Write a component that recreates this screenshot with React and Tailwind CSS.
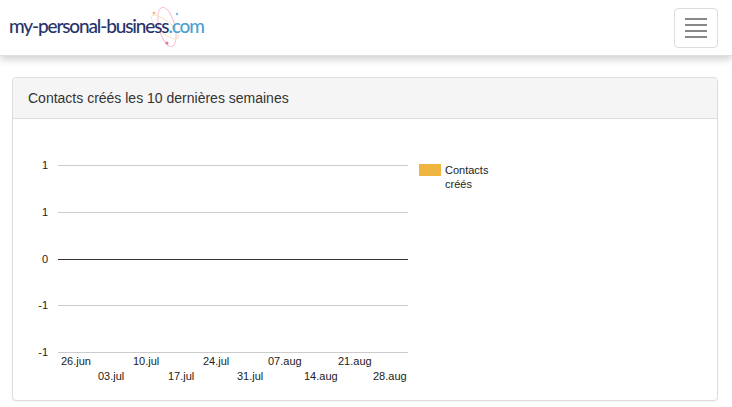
const yTicks = [
  { y: 165, label: "1" },
  { y: 212, label: "1" },
  { y: 259, label: "0", dark: true },
  { y: 305, label: "-1" },
  { y: 352, label: "-1" },
];

const xTicks = [
  { x: 61, y: 365, label: "26.jun" },
  { x: 98, y: 380, label: "03.jul" },
  { x: 133, y: 365, label: "10.jul" },
  { x: 168, y: 380, label: "17.jul" },
  { x: 203, y: 365, label: "24.jul" },
  { x: 237, y: 380, label: "31.jul" },
  { x: 268, y: 365, label: "07.aug" },
  { x: 304, y: 380, label: "14.aug" },
  { x: 338, y: 365, label: "21.aug" },
  { x: 373, y: 380, label: "28.aug" },
];

// svg coordinates below are page coordinates minus the panel body origin
const OX = 13;
const OY = 119;

const Logo = () => (
  <div className="relative w-[200px] h-[44px]">
    <svg className="absolute left-[138px] top-0" width="50" height="46" viewBox="0 0 50 46" fill="none">
      <ellipse cx="20" cy="21" rx="8" ry="20" stroke="#f6c6d4" strokeWidth="1" transform="rotate(-14 20 21)" />
      <ellipse cx="18" cy="21" rx="17" ry="6" stroke="#f8e4cf" strokeWidth="1" transform="rotate(40 18 21)" />
      <circle cx="7" cy="7" r="1.5" fill="#eebd8f" />
      <circle cx="30" cy="8" r="1.2" fill="#7cc0dc" />
      <circle cx="20" cy="37" r="1.5" fill="#d97a9c" />
    </svg>
    <div className="absolute left-0 top-[8px] text-[19px] leading-[24px] tracking-[-1.14px] font-medium font-['Lato',sans-serif] text-[#27336b] whitespace-nowrap">
      my-personal-business<span className="text-[#4aa3cf]">.com</span>
    </div>
  </div>
);

const Burger = () => (
  <button className="flex flex-col justify-center gap-1 w-[44px] h-[40px] px-[10px] bg-white border border-[#dddddd] rounded">
    <span className="block h-[2px] bg-[#888888]" />
    <span className="block h-[2px] bg-[#888888]" />
    <span className="block h-[2px] bg-[#888888]" />
    <span className="block h-[2px] bg-[#888888]" />
  </button>
);

const Chart = () => (
  <svg width="704" height="281" className="block" fontFamily="'Liberation Sans', Arial, sans-serif" fontSize="11">
    {yTicks.map((t) => (
      <g key={t.y}>
        <line x1={58 - OX} x2={408 - OX} y1={t.y - OY + 0.5} y2={t.y - OY + 0.5} stroke={t.dark ? "#333333" : "#cccccc"} />
        <text x={48 - OX} y={t.y - OY + 4} textAnchor="end" fill="#222222">{t.label}</text>
      </g>
    ))}
    {xTicks.map((t) => (
      <text key={t.label} x={t.x - OX} y={t.y - OY} fill="#222222">{t.label}</text>
    ))}
    <rect x={419 - OX} y={164 - OY} width="22" height="12" fill="#f0b441" />
    <text x={445 - OX} y={174 - OY} fill="#222222">Contacts</text>
    <text x={445 - OX} y={188 - OY} fill="#222222">créés</text>
  </svg>
);

export default function App() {
  return (
    <div className="h-[407px] overflow-hidden bg-white font-['Liberation_Sans',Arial,sans-serif] text-[#333333]">
      <nav className="flex items-center justify-between h-[56px] pl-[9px] pr-[14px] bg-white border-b border-[#e0e0e0] shadow-[0_3px_8px_rgba(0,0,0,0.2)]">
        <Logo />
        <Burger />
      </nav>
      <main className="pt-[21px] px-[12px]">
        <section className="w-[706px] bg-white border border-[#dddddd] rounded shadow-[0_1px_1px_rgba(0,0,0,0.05)]">
          <header className="h-[41px] flex items-center px-[15px] bg-[#f5f5f5] border-b border-[#dddddd] rounded-t text-[14px]">
            Contacts créés les 10 dernières semaines
          </header>
          <Chart />
        </section>
      </main>
    </div>
  );
}
